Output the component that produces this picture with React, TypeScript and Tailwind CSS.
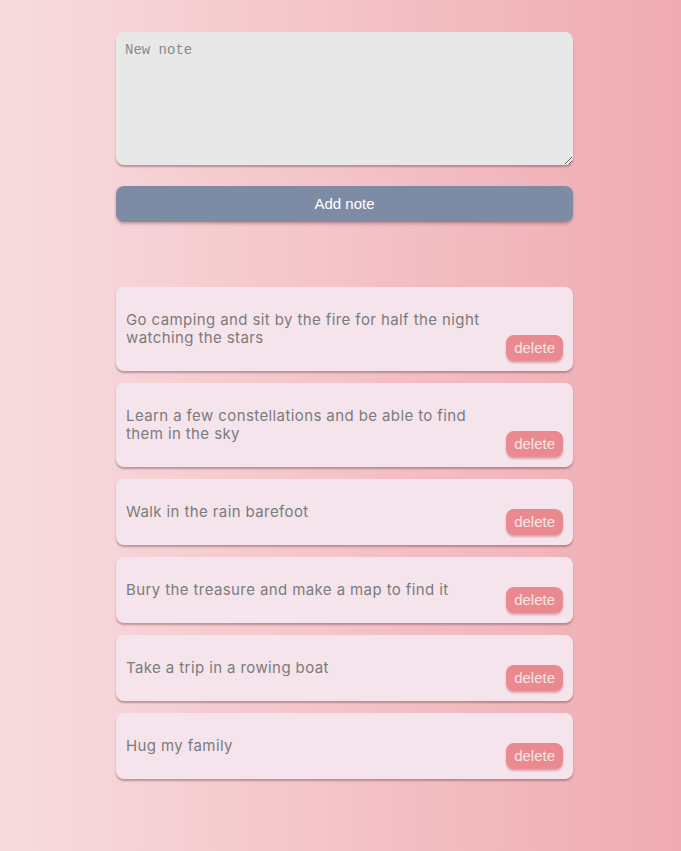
const notes = [
  "Go camping and sit by the fire for half the night watching the stars",
  "Learn a few constellations and be able to find them in the sky",
  "Walk in the rain barefoot",
  "Bury the treasure and make a map to find it",
  "Take a trip in a rowing boat",
  "Hug my family",
];

export default function App() {
  return (
    <div className="min-h-[851px] bg-gradient-to-r from-[#f7dcdf] to-[#efabb1] pt-8">
      <div className="ml-[116px] w-[457px]">
        {/* New note form */}
        <textarea
          placeholder="New note"
          className="block h-[133px] w-full rounded-lg bg-[#e8e8e8] px-[9px] py-[8px] font-['Liberation_Mono',monospace] text-[14px] text-[#555] placeholder:text-[#8a8a8a] shadow-[0_2px_2px_rgba(120,70,80,0.45)] outline-none"
        />
        <button className="mt-[21px] block h-9 w-full rounded-lg bg-[#7e8ba4] font-['Liberation_Sans',Arial,sans-serif] text-[15px] text-white shadow-[0_2px_3px_rgba(120,70,80,0.4)]">
          Add note
        </button>

        {/* Notes */}
        <div className="mt-[65px] flex flex-col gap-3">
          {notes.map((n) => (
            <div
              key={n}
              className="flex items-end justify-between rounded-lg bg-[#f5e4ec] p-[10px] shadow-[0_2px_2px_rgba(120,70,80,0.45)]"
            >
              <p className="my-[14px] max-w-[362px] font-['Inter',sans-serif] text-[15px] leading-[18px] tracking-[0.4px] text-[#7b7b7b]">
                {n}
              </p>
              <button className="h-[26px] shrink-0 rounded-lg bg-[#ea8a90] px-2 font-['Liberation_Sans',Arial,sans-serif] text-[15px] text-[#fbe4e6] shadow-[0_2px_2px_rgba(150,60,70,0.35)]">
                delete
              </button>
            </div>
          ))}
        </div>
      </div>
    </div>
  );
}
